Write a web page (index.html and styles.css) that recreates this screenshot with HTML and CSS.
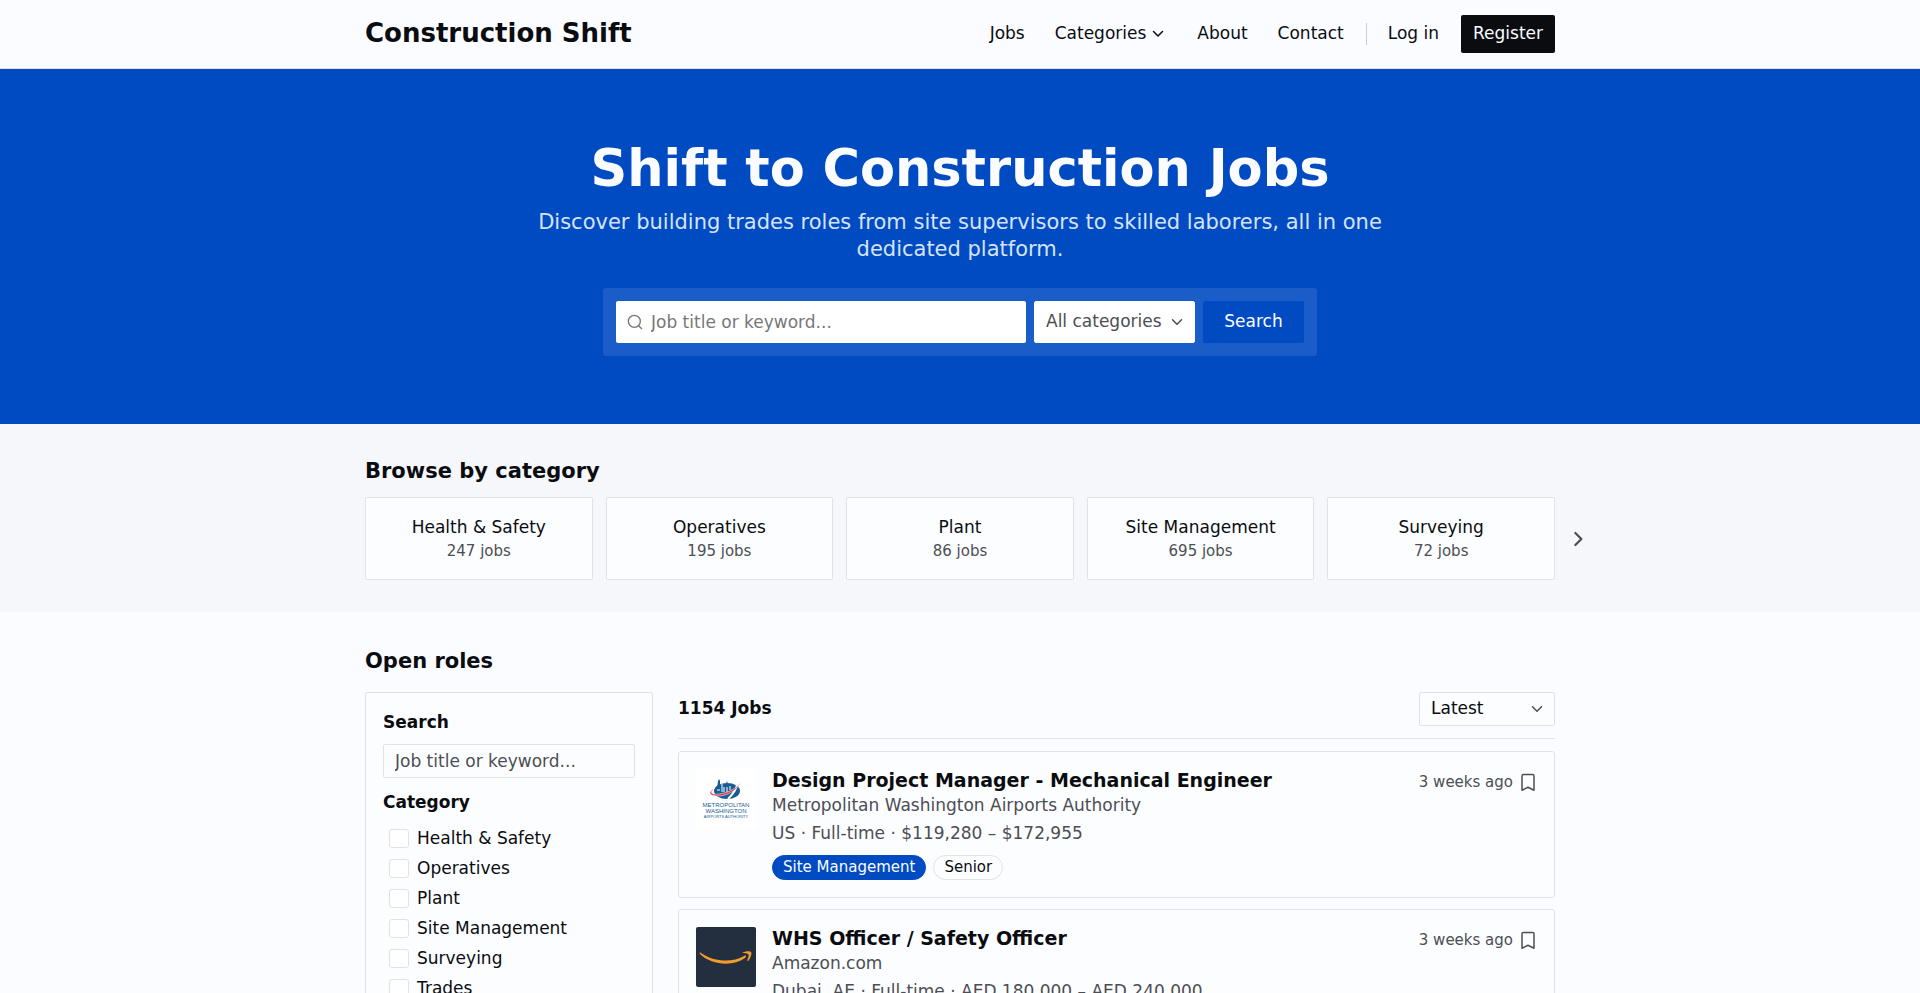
FILE: index.html
```html
<!DOCTYPE html>
<html lang="en">
<head>
  <meta charset="UTF-8">
  <meta name="viewport" content="width=device-width, initial-scale=1.0">
  <title>Construction Shift</title>
  <link rel="stylesheet" href="styles.css">
</head>
<body>
  <header class="site-header">
    <div class="container header-inner">
      <a href="#" class="brand">Construction Shift</a>
      <nav class="main-nav">
        <a href="#">Jobs</a>
        <a href="#" class="with-icon">Categories
          <svg class="icon chevron" viewBox="0 0 24 24"><path d="m6 10 6 6 6-6"/></svg>
        </a>
        <a href="#">About</a>
        <a href="#">Contact</a>
        <span class="divider"></span>
        <a href="#">Log in</a>
        <a href="#" class="register">Register</a>
      </nav>
    </div>
  </header>

  <section class="hero">
    <h1>Shift to Construction Jobs</h1>
    <p>Discover building trades roles from site supervisors to skilled laborers, all in one dedicated platform.</p>
    <form class="hero-search">
      <div class="keyword">
        <svg class="icon" viewBox="0 0 24 24"><circle cx="11" cy="11" r="9"/><path d="m22 22-4.500-4.500"/></svg>
        <input type="text" placeholder="Job title or keyword..." aria-label="Job title or keyword">
      </div>
      <div class="select-wrap">
        <select aria-label="Category">
          <option>All categories</option>
        </select>
        <svg class="icon chevron" viewBox="0 0 24 24"><path d="m6 9 6 6 6-6"/></svg>
      </div>
      <button type="button">Search</button>
    </form>
  </section>

  <section class="categories">
    <div class="container">
      <h2>Browse by category</h2>
      <div class="category-list">
        <a href="#" class="category">Health &amp; Safety<small>247 jobs</small></a>
        <a href="#" class="category">Operatives<small>195 jobs</small></a>
        <a href="#" class="category">Plant<small>86 jobs</small></a>
        <a href="#" class="category">Site Management<small>695 jobs</small></a>
        <a href="#" class="category">Surveying<small>72 jobs</small></a>
        <button type="button" class="next" aria-label="Next categories">
          <svg class="icon" viewBox="0 0 24 24"><path d="m8.500 4 8 8-8 8"/></svg>
        </button>
      </div>
    </div>
  </section>

  <main class="container roles">
    <h2>Open roles</h2>
    <div class="roles-grid">
      <aside class="filters">
        <label class="filter-title" for="filter-search">Search</label>
        <input type="text" id="filter-search" placeholder="Job title or keyword...">
        <h3 class="filter-title">Category</h3>
        <ul>
          <li><label><input type="checkbox">Health &amp; Safety</label></li>
          <li><label><input type="checkbox">Operatives</label></li>
          <li><label><input type="checkbox">Plant</label></li>
          <li><label><input type="checkbox">Site Management</label></li>
          <li><label><input type="checkbox">Surveying</label></li>
          <li><label><input type="checkbox">Trades</label></li>
        </ul>
      </aside>

      <div class="results">
        <div class="results-head">
          <h3>1154 Jobs</h3>
          <div class="select-wrap">
            <select aria-label="Sort by">
              <option>Latest</option>
            </select>
            <svg class="icon chevron" viewBox="0 0 24 24"><path d="m6 9 6 6 6-6"/></svg>
          </div>
        </div>

        <article class="job">
          <svg class="job-logo" viewBox="0 0 60 60" aria-label="Metropolitan Washington Airports Authority">
            <rect width="60" height="60" fill="#fff"/>
            <ellipse cx="31" cy="22" rx="13" ry="8" fill="#175d94"/>
            <path d="M21 19l1-7 1-2 1 2v7zM27 17l3-2 1-3 1 3 4 1v3z" fill="#175d94"/>
            <path d="M26 14v9M21 21h3m4-3v5m3-5v5m3-6v4" fill="none" stroke="#fff"/>
            <path d="M41 15c0 6-5 11-9 15" fill="none" stroke="#fff" stroke-width="2"/>
            <path d="M19 19c-6 4-4 7 4 6 9-1 18-6 22-12-4 8-13 14-23 14-9 0-11-4-3-8z" fill="#df3d55" stroke="#fff" stroke-width="0.500"/>
            <g class="logo-text" fill="#175d94" text-anchor="middle">
              <text x="30" y="38">METROPOLITAN</text>
              <text x="30" y="44">WASHINGTON</text>
              <text x="30" y="49" class="logo-small">AIRPORTS AUTHORITY</text>
            </g>
          </svg>
          <div class="job-body">
            <h4><a href="#">Design Project Manager - Mechanical Engineer</a></h4>
            <p class="company">Metropolitan Washington Airports Authority</p>
            <p class="meta">US · Full-time · $119,280 – $172,955</p>
            <div class="tags">
              <span class="tag tag-main">Site Management</span>
              <span class="tag">Senior</span>
            </div>
          </div>
          <div class="job-side">
            <time>3 weeks ago</time>
            <button type="button" aria-label="Save job">
              <svg class="icon" viewBox="0 0 24 24"><path d="M4 4a2 2 0 0 1 2-2h12a2 2 0 0 1 2 2v19l-8-4-8 4z"/></svg>
            </button>
          </div>
        </article>

        <article class="job">
          <svg class="job-logo" viewBox="0 0 60 60" aria-label="Amazon.com">
            <rect width="60" height="60" rx="2" fill="#232f3e"/>
            <path d="M5 26c13 9 31 10 43 3 2-1 3 0 1 2-12 9-34 7-45-4-1-1 0-2 1-1z" fill="#f39b2b"/>
            <path d="M46 26c3-2 8-2 9-1s0 6-3 9c-1 0-1 0 0-3 1-2 1-3 0-4s-3-1-6-1z" fill="#f39b2b"/>
          </svg>
          <div class="job-body">
            <h4><a href="#">WHS Officer / Safety Officer</a></h4>
            <p class="company">Amazon.com</p>
            <p class="meta">Dubai, AE · Full-time · AED 180,000 – AED 240,000</p>
            <div class="tags">
              <span class="tag tag-main">Health &amp; Safety</span>
            </div>
          </div>
          <div class="job-side">
            <time>3 weeks ago</time>
            <button type="button" aria-label="Save job">
              <svg class="icon" viewBox="0 0 24 24"><path d="M4 4a2 2 0 0 1 2-2h12a2 2 0 0 1 2 2v19l-8-4-8 4z"/></svg>
            </button>
          </div>
        </article>
      </div>
    </div>
  </main>
</body>
</html>
```
FILE: styles.css
```css
* {
  box-sizing: border-box;
}

body {
  margin: 0;
  height: 100vh;
  overflow: hidden;
  font-family: "DejaVu Sans", sans-serif;
  font-size: 17px;
  line-height: 26px;
  color: #0a0c10;
  background: #fbfcff;
}

h1, h2, h3, h4, p, ul {
  margin: 0;
  padding: 0;
}

ul { list-style: none; }

a {
  color: inherit;
  text-decoration: none;
}

input, select, button {
  font: inherit;
  color: inherit;
}

button { cursor: pointer; }

h2 {
  font-size: 21px;
  line-height: 30px;
}

.container {
  width: 100%;
  max-width: 1190px;
  margin: 0 auto;
}

.icon {
  width: 18px;
  height: 18px;
  flex: none;
  fill: none;
  stroke: currentColor;
  stroke-width: 2;
  stroke-linecap: round;
  stroke-linejoin: round;
}

.icon.chevron {
  width: 18px;
  height: 18px;
}

/* header */
.site-header {
  padding: 15px 0;
  border-bottom: 1px solid #dfe2e8;
}

.header-inner {
  display: flex;
  justify-content: space-between;
  align-items: center;
}

.brand {
  padding-bottom: 1px;
  font-size: 26px;
  line-height: 25px;
  font-weight: bold;
}

.main-nav {
  display: flex;
  align-items: center;
  gap: 30px;
  line-height: 24px;
}

.main-nav a { padding-bottom: 2px; }

.with-icon {
  display: flex;
  align-items: center;
  gap: 3px;
}

.divider {
  width: 1px;
  height: 22px;
  margin: 0 -9px 0 -8px;
  background: #c9ccd2;
}

.main-nav .register {
  margin-left: -8px;
  padding: 6px 12px 8px;
  border-radius: 2px;
  color: #fbfcff;
  background: #0a0c10;
}

/* hero */
.hero {
  display: flex;
  flex-direction: column;
  align-items: center;
  padding: 68px 20px;
  text-align: center;
  color: #fbfcff;
  background: #004ac2;
}

.hero h1 {
  font-size: 51px;
  line-height: 64px;
}

.hero p {
  max-width: 870px;
  margin-top: 8px;
  font-size: 21px;
  line-height: 27px;
  color: #d5e4fb;
}

.hero-search {
  display: flex;
  gap: 8px;
  width: 100%;
  max-width: 714px;
  margin-top: 25px;
  padding: 13px;
  border-radius: 3px;
  background: #1a5cc8;
}

.keyword {
  display: flex;
  align-items: center;
  flex: 1;
  gap: 8px;
  padding: 0 11px;
  border-radius: 2px;
  color: #777;
  background: #fff;
}

.keyword .icon {
  width: 16px;
  height: 16px;
}

.keyword input {
  flex: 1;
  min-width: 0;
  height: 42px;
  padding: 0;
  border: 0;
  outline: 0;
  background: none;
}

.keyword input::placeholder { color: #777; }

.select-wrap {
  position: relative;
  display: flex;
}

.select-wrap select {
  appearance: none;
  width: 100%;
  border: 1px solid #e0e2e7;
  border-radius: 2px;
  background: #fff;
}

/* arrow drawn over the native select */
.select-wrap .chevron {
  position: absolute;
  top: 50%;
  right: 9px;
  margin-top: -9px;
  color: #4c4e53;
  pointer-events: none;
}

.hero-search select {
  padding: 0 32px 2px 11px;
  border-color: #fff;
  color: #4c4e53;
}

.hero-search button {
  width: 101px;
  padding: 0 0 2px;
  border: 0;
  border-radius: 2px;
  color: #fbfcff;
  background: #004ac2;
}

/* categories */
.categories {
  padding: 32px 0;
  background: #f6f7fb;
}

.category-list {
  position: relative;
  display: grid;
  grid-template-columns: repeat(5, 1fr);
  gap: 13px;
  margin-top: 11px;
}

.category {
  display: flex;
  flex-direction: column;
  padding: 16px;
  border: 1px solid #e0e2e7;
  border-radius: 2px;
  text-align: center;
  background: #fcfdff;
}

.category small {
  font-size: 15px;
  line-height: 23px;
  color: #4c4e53;
}

.next {
  position: absolute;
  top: 50%;
  left: 100%;
  display: flex;
  margin: -12px 0 0 11px;
  padding: 3px;
  border: 0;
  color: #4c4e53;
  background: none;
}

.next .icon { stroke-width: 3; }

/* open roles */
.roles { padding-top: 34px; }

.roles-grid {
  display: grid;
  grid-template-columns: 288px 1fr;
  align-items: start;
  gap: 25px;
  margin-top: 16px;
}

.filters {
  padding: 16px 17px;
  border: 1px solid #e0e2e7;
  border-radius: 2px;
  background: #fcfdff;
}

.filter-title {
  display: block;
  font-size: 17px;
  font-weight: bold;
}

.filters input[type="text"] {
  width: 100%;
  height: 34px;
  margin: 9px 0 11px;
  padding: 0 11px;
  border: 1px solid #e0e2e7;
  border-radius: 2px;
  background: none;
}

.filters input::placeholder { color: #4c4e53; }

.filters ul { margin-top: 8px; }

.filters li label {
  display: flex;
  align-items: center;
  gap: 8px;
  height: 30px;
  padding-left: 6px;
}

.filters input[type="checkbox"] {
  appearance: none;
  width: 20px;
  height: 19px;
  margin: 0;
  border: 1px solid #e0e2e7;
  border-radius: 3px;
  background: #fff;
}

.results-head {
  display: flex;
  justify-content: space-between;
  align-items: flex-start;
  margin-bottom: 12px;
  padding-bottom: 12px;
  border-bottom: 1px solid #e0e2e7;
}

.results-head h3 {
  font-size: 17px;
  line-height: 32px;
}

.results-head select {
  width: 136px;
  height: 34px;
  padding: 0 11px 2px;
  background: #fcfdff;
}

.job {
  display: flex;
  align-items: flex-start;
  gap: 16px;
  margin-bottom: 11px;
  padding: 17px;
  border: 1px solid #e0e2e7;
  border-radius: 3px;
  background: #fcfdff;
}

.job-logo {
  flex: none;
  width: 60px;
  height: 60px;
}

.logo-text {
  font-family: "Liberation Sans", sans-serif;
  font-size: 6px;
}

.logo-small { font-size: 4px; }

.job-body { flex: 1; }

.job h4 {
  font-size: 19px;
  line-height: 23px;
}

.company,
.meta {
  color: #4c4e53;
}

.meta { margin-top: 2px; }

.tags {
  display: flex;
  gap: 7px;
  margin-top: 9px;
}

.tag {
  padding: 0 10px;
  border: 1px solid #e0e2e7;
  border-radius: 13px;
  font-size: 15px;
  line-height: 23px;
}

.tag-main {
  border-color: #004ac2;
  color: #fbfcff;
  background: #004ac2;
}

.job-side {
  display: flex;
  align-items: center;
  gap: 6px;
  font-size: 15px;
  color: #4c4e53;
}

.job-side button {
  display: flex;
  padding: 0;
  border: 0;
  background: none;
}
```
